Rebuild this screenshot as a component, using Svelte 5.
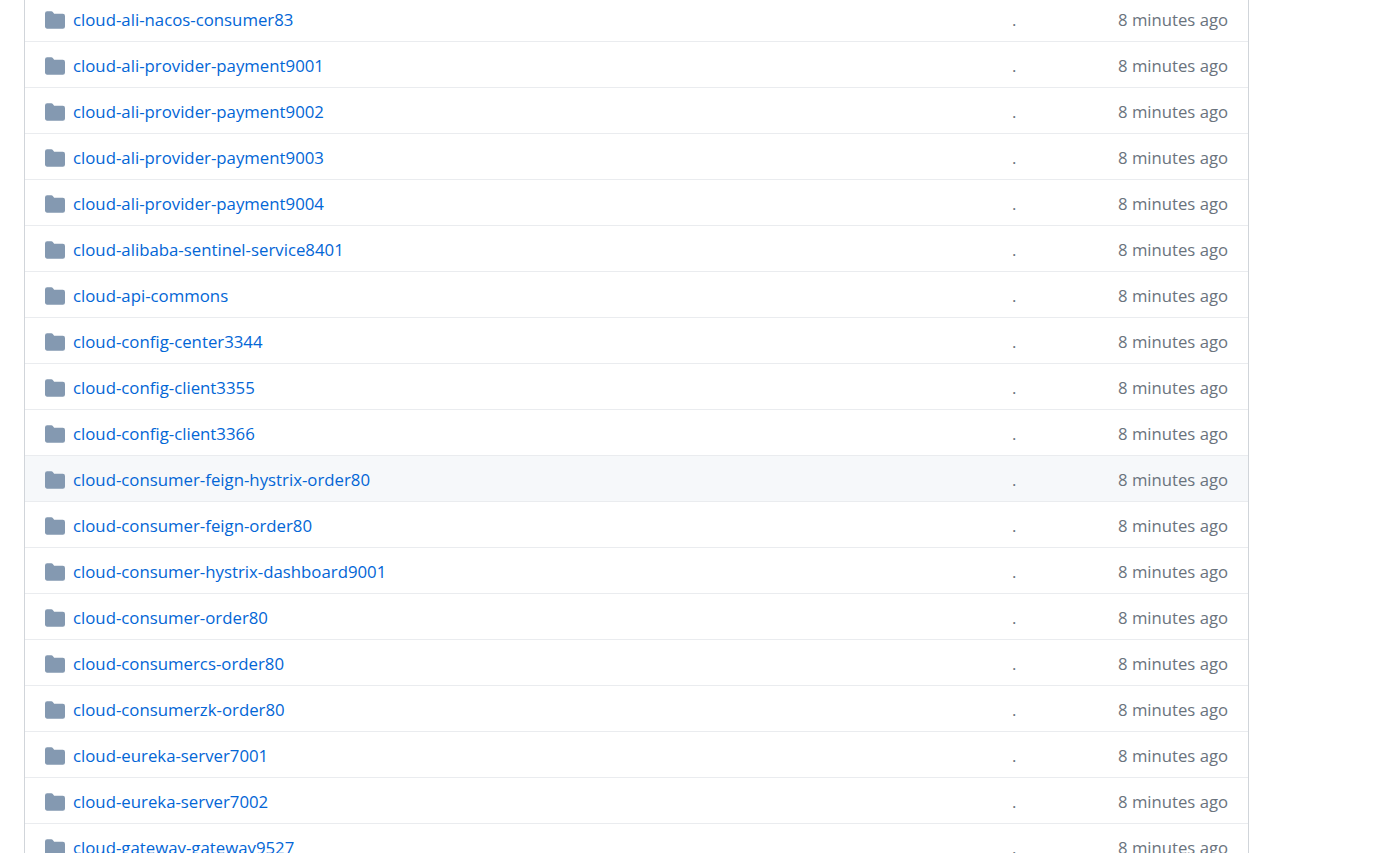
<script>
	const names = [
		"cloud-ali-nacos-consumer83",
		"cloud-ali-provider-payment9001",
		"cloud-ali-provider-payment9002",
		"cloud-ali-provider-payment9003",
		"cloud-ali-provider-payment9004",
		"cloud-alibaba-sentinel-service8401",
		"cloud-api-commons",
		"cloud-config-center3344",
		"cloud-config-client3355",
		"cloud-config-client3366",
		"cloud-consumer-feign-hystrix-order80",
		"cloud-consumer-feign-order80",
		"cloud-consumer-hystrix-dashboard9001",
		"cloud-consumer-order80",
		"cloud-consumercs-order80",
		"cloud-consumerzk-order80",
		"cloud-eureka-server7001",
		"cloud-eureka-server7002",
		"cloud-gateway-gateway9527"
	];
	const hovered = "cloud-consumer-feign-hystrix-order80";
</script>

<main class="page">
	<div class="files">
		{#each names as name}
			<div class="row" class:hover={name === hovered}>
				<svg class="folder" viewBox="0 0 16 16" aria-hidden="true">
					<path d="M1.75 1A1.75 1.75 0 0 0 0 2.75v10.5C0 14.22.78 15 1.75 15h12.5A1.75 1.75 0 0 0 16 13.25v-8.5A1.75 1.75 0 0 0 14.25 3H7.5a.25.25 0 0 1-.2-.1l-.9-1.2C6.07 1.26 5.55 1 5 1H1.75Z" />
				</svg>
				<a class="name" href="#top">{name}</a>
				<span class="message">.</span>
				<span class="age">8 minutes ago</span>
			</div>
		{/each}
	</div>
</main>

<style>
	:global(body) {
		background: #fff;
		overflow: hidden;
	}
	.page {
		height: 853px;
		overflow: hidden;
		padding-left: 24px;
		font-family: "Open Sans", "Noto Sans", sans-serif;
		font-size: 16.8px;
	}
	.files {
		width: 1223px;
		margin-top: -4px;
		border-left: 1px solid #d1d5da;
		border-right: 1px solid #d1d5da;
	}
	.row {
		display: flex;
		align-items: center;
		height: 43px;
		border-bottom: 1px solid #eaecef;
		padding: 2px 20px 0;
	}
	.row.hover {
		background: #f6f8fa;
	}
	.folder {
		width: 20px;
		height: 20px;
		fill: #8499b1;
		flex: none;
	}
	.name {
		width: 939px;
		margin-left: 8px;
		color: #0366d6;
		text-decoration: none;
		white-space: nowrap;
		line-height: 24px;
		padding-top: 1px;
	}
	.message {
		color: #6a737d;
		line-height: 24px;
		padding-top: 1px;
	}
	.age {
		margin-left: auto;
		color: #6a737d;
		font-size: 16.7px;
		line-height: 24px;
		padding-top: 1px;
	}
</style>
